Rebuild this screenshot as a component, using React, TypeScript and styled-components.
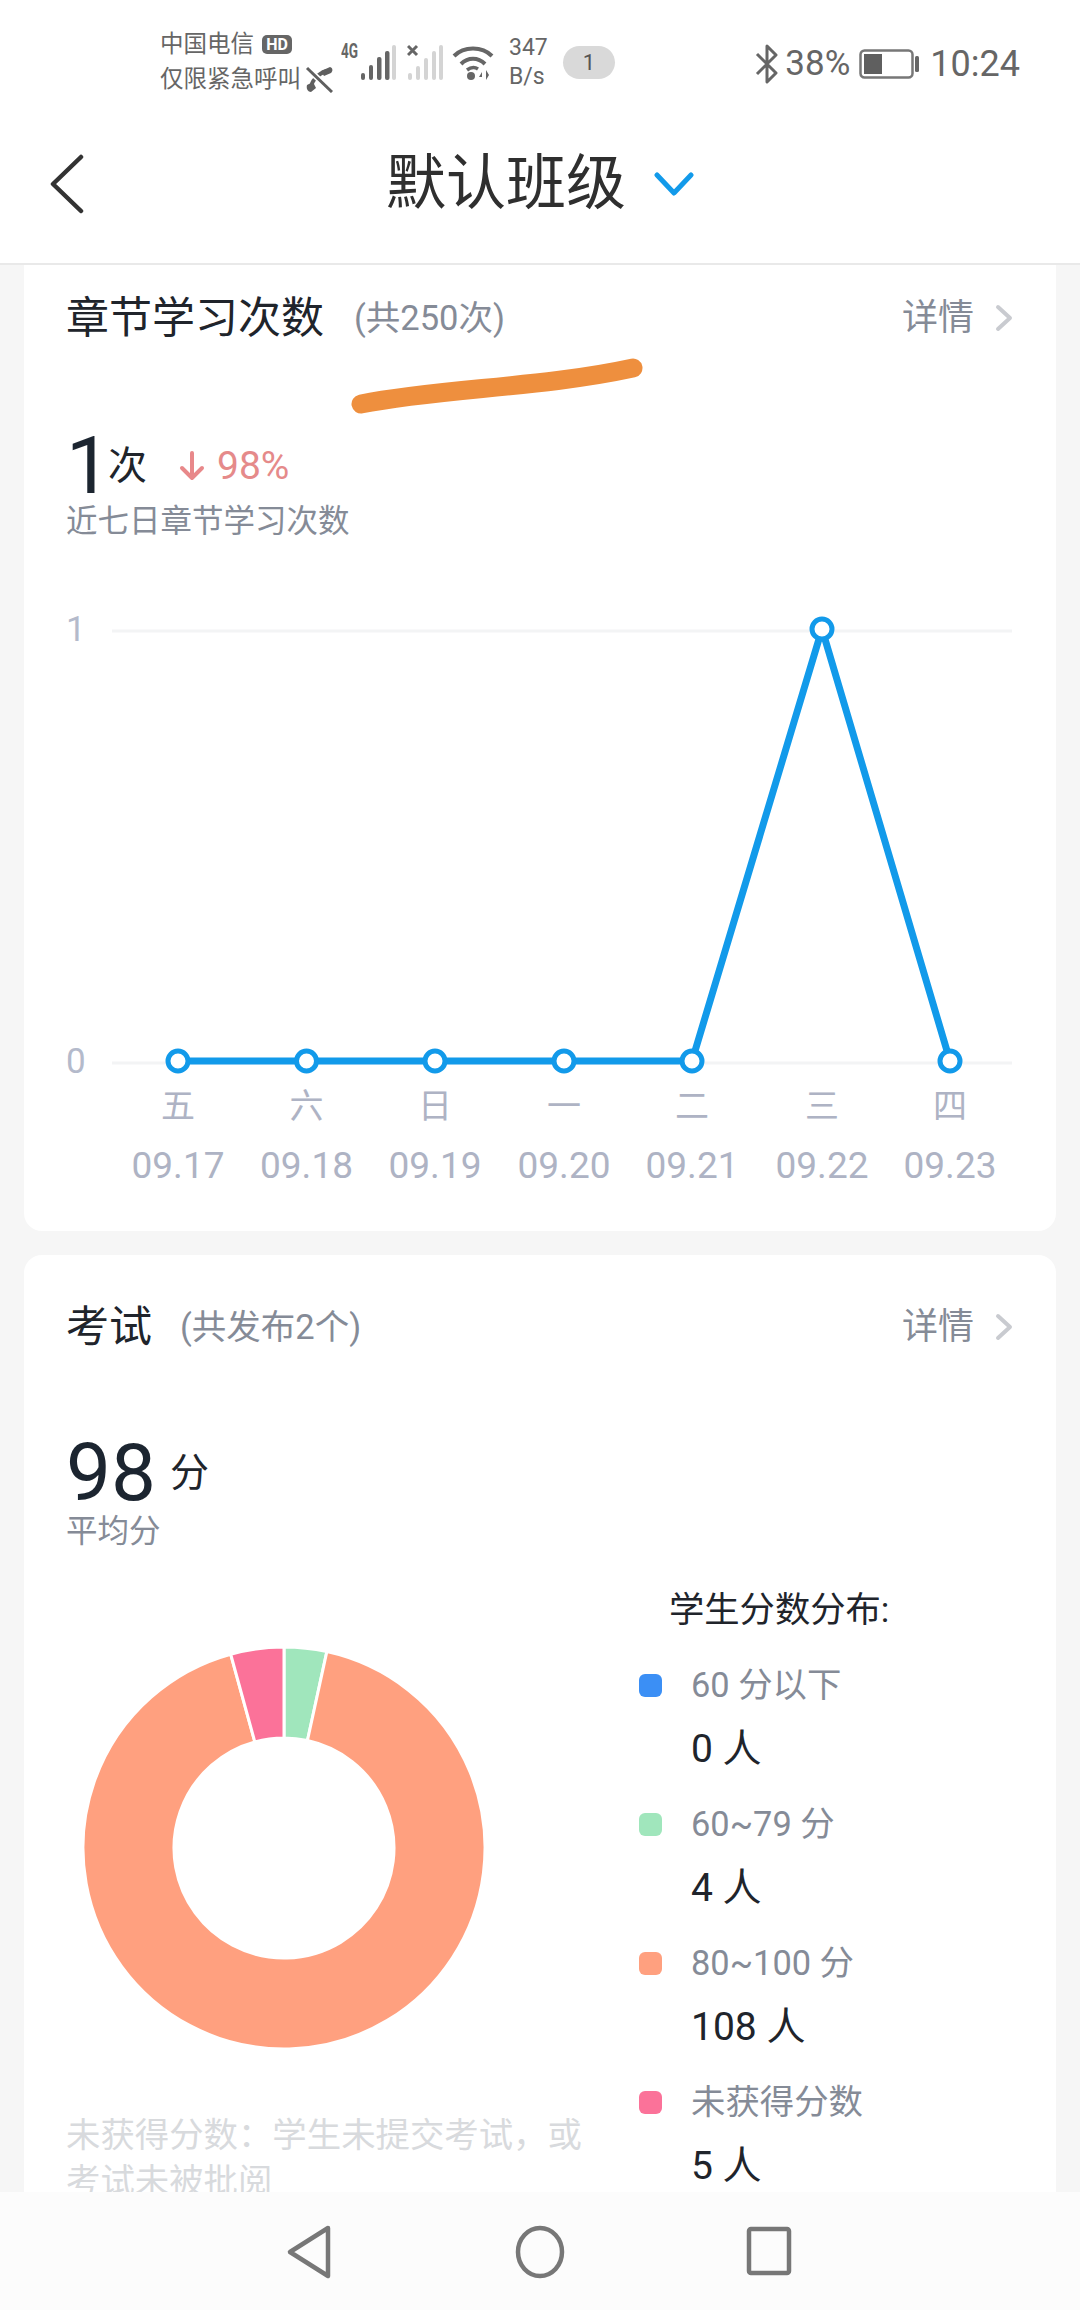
import styled, { createGlobalStyle } from "styled-components";

const GlobalStyle = createGlobalStyle`
  html, body {
    margin: 0;
    padding: 0;
    background: #fff;
  }
  body {
    font-family: Roboto, "Noto Sans CJK SC", sans-serif;
  }
`;

const Page = styled.div`
  position: relative;
  width: 1080px;
  height: 2310px;
  display: flex;
  flex-direction: column;
  overflow: hidden;
  background: #f6f6f6;
`;

const StatusBar = styled.div`
  height: 100px;
  flex: none;
  display: flex;
  align-items: flex-start;
  padding: 30px 60px 0 160px;
  box-sizing: border-box;
  background: #fff;
  color: #666;
`;

const Carrier = styled.div`
  width: 146px;
  display: flex;
  flex-direction: column;
  gap: 6px;
  font-size: 23.5px;
  line-height: 29px;
  white-space: nowrap;
`;

const CarrierLine = styled.div`
  display: flex;
  align-items: center;
  gap: 8px;
`;

const HdBadge = styled.span`
  width: 30px;
  height: 19px;
  border-radius: 5px;
  background: #666;
  color: #fff;
  font-size: 16px;
  font-weight: 700;
  line-height: 19px;
  text-align: center;
`;

const StatusIcon = styled.svg<{ $top: number; $left: number }>`
  flex: none;
  margin-top: ${({ $top }) => $top}px;
  margin-left: ${({ $left }) => $left}px;
`;

const Signals = styled.div`
  display: flex;
  align-items: flex-start;
`;

const Network = styled.span`
  width: 18px;
  margin: 10px 0 0 8px;
  font-size: 20px;
  font-weight: 700;
  line-height: 22px;
  transform: scaleX(0.68);
  transform-origin: left center;
`;

const Speed = styled.div`
  width: 52px;
  margin: 3px 0 0 15px;
  font-size: 23px;
  line-height: 29px;
`;

const CountBadge = styled.span`
  width: 52px;
  height: 33px;
  margin: 16px 0 0 2px;
  border-radius: 17px;
  background: #d9d9d9;
  color: #555;
  font-size: 22px;
  line-height: 33px;
  text-align: center;
`;

const StatusRight = styled.div`
  margin-left: auto;
  margin-top: -2px;
  display: flex;
  align-items: center;
  height: 72px;
`;

const BatteryText = styled.span`
  font-size: 35px;
  line-height: 72px;
  margin: 0 9px 0 6px;
`;

const Clock = styled.span`
  font-size: 36px;
  line-height: 72px;
  margin-left: 11px;
`;

const TitleBar = styled.div`
  height: 165px;
  flex: none;
  display: grid;
  grid-template-columns: 1fr auto 1fr;
  align-items: center;
  padding-top: 4px;
  box-sizing: border-box;
  border-bottom: 2px solid #e9e9e9;
  background: #fff;
`;

const BackSlot = styled.div`
  padding-left: 50px;
  display: flex;
`;

const TitleGroup = styled.div`
  display: flex;
  align-items: center;
  gap: 28px;
`;

const Title = styled.span`
  font-size: 60px;
  line-height: 70px;
  color: #2f2f2f;
`;

const Main = styled.div`
  flex: 1;
  min-height: 0;
  overflow: hidden;
  padding: 0 24px;
  display: flex;
  flex-direction: column;
  gap: 24px;
`;

const Card = styled.section<{ $top: number }>`
  flex: none;
  padding: ${({ $top }) => $top}px 42px 32px;
  border-radius: 0 0 18px 18px;
  background: #fff;

  & + & {
    border-radius: 18px;
  }
`;

const CardHead = styled.div`
  height: 100px;
  display: flex;
  align-items: center;
`;

const CardTitle = styled.h2`
  margin: 0;
  font-size: 43px;
  font-weight: 400;
  line-height: 60px;
  color: #20242b;
`;

const CardCount = styled.span<{ $gap: number }>`
  margin-left: ${({ $gap }) => $gap}px;
  font-size: 34.5px;
  line-height: 60px;
  color: #858b97;
`;

const DetailLink = styled.div`
  margin-left: auto;
  display: flex;
  align-items: center;
  gap: 20px;
  font-size: 36px;
  line-height: 60px;
  color: #858b97;
`;

const StatRow = styled.div<{ $top: number }>`
  height: 68px;
  margin-top: ${({ $top }) => $top}px;
  display: flex;
  align-items: center;
`;

const StatValue = styled.span`
  font-size: 80px;
  line-height: 68px;
  color: #1c2530;
`;

const StatUnit = styled.span<{ $gap: number }>`
  margin-left: ${({ $gap }) => $gap}px;
  font-size: 39px;
  line-height: 50px;
  color: #20242b;
`;

const Trend = styled.span`
  display: flex;
  align-items: center;
  gap: 12px;
  margin-left: 32px;
  font-size: 39px;
  line-height: 50px;
  color: #e58a8a;
`;

const StatNote = styled.div<{ $top: number }>`
  margin-top: ${({ $top }) => $top}px;
  font-size: 31.5px;
  line-height: 44px;
  color: #858b97;
`;

const Highlight = styled.svg`
  position: absolute;
  left: 351px;
  top: 350px;
`;

const ChartSvg = styled.svg`
  display: block;
  margin-top: 35px;
`;

const ExamBody = styled.div`
  margin-top: 28px;
  display: grid;
  grid-template-columns: 573px 1fr;
`;

const DonutColumn = styled.div`
  padding-top: 64px;
`;

const DonutSvg = styled.svg`
  display: block;
  margin-left: 16px;
`;

const DonutNote = styled.p`
  width: 530px;
  margin: 62px 0 0;
  font-size: 34.4px;
  line-height: 46px;
  color: #d8dadd;
`;

const LegendHeading = styled.div`
  padding-left: 30px;
  margin-bottom: 24px;
  font-size: 35.3px;
  line-height: 56px;
  color: #20242b;
  white-space: nowrap;
`;

const LegendItem = styled.div`
  display: grid;
  grid-template-columns: 52px 1fr;
  row-gap: 16px;
  align-items: center;
  margin-bottom: 27px;
`;

const LegendDot = styled.span<{ $color: string }>`
  width: 23px;
  height: 23px;
  border-radius: 6px;
  background: ${({ $color }) => $color};
`;

const LegendLabel = styled.span`
  font-size: 34.4px;
  line-height: 46px;
  color: #858b97;
`;

const LegendValue = styled.span`
  grid-column: 2;
  font-size: 39px;
  line-height: 50px;
  color: #20242b;
`;

const NavBar = styled.div`
  height: 118px;
  flex: none;
  display: flex;
  align-items: flex-start;
  padding: 32px 0 0 286px;
  box-sizing: border-box;
  background: #fcfcfc;
`;

const NavIcon = styled.svg<{ $gap?: number }>`
  margin-left: ${({ $gap = 0 }) => $gap}px;
  fill: none;
  stroke: #777;
  stroke-width: 4.5;
  stroke-linejoin: round;
`;

const Chevron = ({ color, width, height, points, strokeWidth }: { color: string; width: number; height: number; points: string; strokeWidth: number }) => (
  <svg width={width} height={height} viewBox={`0 0 ${width} ${height}`}>
    <polyline points={points} fill="none" stroke={color} strokeWidth={strokeWidth} strokeLinecap="round" strokeLinejoin="round" />
  </svg>
);

const Points = [
  { x: 112, v: 0, day: "五", date: "09.17" },
  { x: 240.5, v: 0, day: "六", date: "09.18" },
  { x: 369, v: 0, day: "日", date: "09.19" },
  { x: 498, v: 0, day: "一", date: "09.20" },
  { x: 626, v: 0, day: "二", date: "09.21" },
  { x: 756, v: 1, day: "三", date: "09.22" },
  { x: 884, v: 0, day: "四", date: "09.23" },
];

const y0 = 482;
const y1 = 50;

const LineChart = () => {
  const pointY = (v: number) => (v === 1 ? y1 : y0);
  return (
    <ChartSvg width="948" height="620" viewBox="0 0 948 620">
      <line x1="46" x2="946" y1={y1 + 2} y2={y1 + 2} stroke="#f3f4f5" strokeWidth="3" />
      <line x1="46" x2="946" y1={y0 + 2} y2={y0 + 2} stroke="#f3f4f5" strokeWidth="3" />
      <text x="0" y={y1 + 12} fontSize="35" fill="#b4bacb">1</text>
      <text x="0" y={y0 + 12} fontSize="35" fill="#b4bacb">0</text>
      <polyline
        points={Points.map((p) => `${p.x},${pointY(p.v)}`).join(" ")}
        fill="none"
        stroke="#129aea"
        strokeWidth="7"
        strokeLinejoin="round"
      />
      {Points.map((p) => (
        <g key={p.date}>
          <circle cx={p.x} cy={pointY(p.v)} r="10" fill="#fff" stroke="#129aea" strokeWidth="5" />
          <text x={p.x} y={y0 + 45} dy="0.36em" fontSize="34" fill="#aeb3c4" textAnchor="middle">
            {p.day}
          </text>
          <text x={p.x} y="599" fontSize="37" fill="#aeb3c4" textAnchor="middle">
            {p.date}
          </text>
        </g>
      ))}
    </ChartSvg>
  );
};

const Slices = [
  { value: 4, color: "#a0e6bc" },
  { value: 108, color: "#ffa07f" },
  { value: 5, color: "#fb7299" },
];

const slicePath = (from: number, to: number) => {
  const cx = 202;
  const cy = 202;
  const outer = 201;
  const inner = 110;
  const at = (r: number, a: number) => {
    const rad = (a - 90) * (Math.PI / 180);
    return `${(cx + r * Math.cos(rad)).toFixed(2)} ${(cy + r * Math.sin(rad)).toFixed(2)}`;
  };
  const large = to - from > 180 ? 1 : 0;
  return `M${at(outer, from)} A${outer} ${outer} 0 ${large} 1 ${at(outer, to)} L${at(inner, to)} A${inner} ${inner} 0 ${large} 0 ${at(inner, from)} Z`;
};

const Donut = () => {
  const total = Slices.reduce((acc, s) => acc + s.value, 0);
  let start = 0;
  return (
    <DonutSvg width="404" height="404" viewBox="0 0 404 404">
      {Slices.map((s) => {
        const end = start + (s.value / total) * 360;
        const d = slicePath(start, end);
        start = end;
        return <path key={s.color} d={d} fill={s.color} stroke="#fff" strokeWidth="3" />;
      })}
    </DonutSvg>
  );
};

const legend = [
  { color: "#3b8ff5", label: "60 分以下", value: "0 人" },
  { color: "#a0e6bc", label: "60~79 分", value: "4 人" },
  { color: "#ffa07f", label: "80~100 分", value: "108 人" },
  { color: "#fb7299", label: "未获得分数", value: "5 人" },
];

// full-width colon and comma, as in the original copy
const donutNote = "未获得分数\uFF1A学生未提交考试\uFF0C或考试未被批阅";

const Detail = () => (
  <DetailLink>
    详情
    <Chevron color="#c9cbd0" width="20" height="28" points="4,3 16,14 4,25" strokeWidth={4} />
  </DetailLink>
);

export default function App() {
  return (
    <>
      <GlobalStyle />
      <Page>
        <StatusBar>
          <Carrier>
            <CarrierLine>
              中国电信
              <HdBadge>HD</HdBadge>
            </CarrierLine>
            <CarrierLine>仅限紧急呼叫</CarrierLine>
          </Carrier>
          <Signals>
            <StatusIcon $top={35} $left={-1} width="28" height="28" viewBox="0 0 28 28">
              <path d="M6 23 C6 17 13 8 22 6" fill="none" stroke="#5f5f5f" strokeWidth="4" />
              <path d="M2 20 L8 17 L11 23 L6 27 C3 27 1 24 2 20 Z" fill="#5f5f5f" />
              <path d="M16 6 L25 2 C28 3 28 6 26 8 L19 11 Z" fill="#5f5f5f" />
              <line x1="2" y1="3" x2="27" y2="27" stroke="#fff" strokeWidth="6" />
              <line x1="2" y1="3" x2="27" y2="27" stroke="#5f5f5f" strokeWidth="3" />
            </StatusIcon>
            <Network>4G</Network>
            <StatusIcon $top={15} $left={1} width="36" height="36" viewBox="0 0 36 36">
              <rect x="1" y="28" width="4" height="7" rx="2" fill="#666" />
              <rect x="9" y="20" width="4" height="15" rx="2" fill="#666" />
              <rect x="17" y="12" width="4.5" height="23" rx="2" fill="#666" />
              <rect x="25" y="6" width="4.5" height="29" rx="2" fill="#666" />
              <rect x="32" y="0" width="4" height="35" rx="2" fill="#d4d4d4" />
            </StatusIcon>
            <StatusIcon $top={13} $left={11} width="36" height="38" viewBox="0 0 36 38">
              <path d="M1 3l9 9M10 3l-9 9" stroke="#666" strokeWidth="3" />
              <rect x="1" y="30" width="4" height="7" rx="2" fill="#d4d4d4" />
              <rect x="9" y="23" width="4" height="14" rx="2" fill="#d4d4d4" />
              <rect x="17" y="15" width="4" height="22" rx="2" fill="#d4d4d4" />
              <rect x="25" y="8" width="4" height="29" rx="2" fill="#d4d4d4" />
              <rect x="32" y="2" width="4" height="35" rx="2" fill="#d4d4d4" />
            </StatusIcon>
            <StatusIcon $top={15} $left={9} width="42" height="36" viewBox="0 0 42 36">
              <path d="M2 11c10-10 28-10 38 0" fill="none" stroke="#666" strokeWidth="4" />
              <path d="M9 19c7-7 17-7 24 0" fill="none" stroke="#666" strokeWidth="4" />
              <path d="M15 25c4-3 8-3 11-1" fill="none" stroke="#666" strokeWidth="3.5" />
              <circle cx="19" cy="31" r="4" fill="#666" />
              <path d="M30 27l-3 5h3zM34 25v10l3-5z" fill="#666" />
            </StatusIcon>
            <Speed>
              347
              <br />
              B/s
            </Speed>
            <CountBadge>1</CountBadge>
          </Signals>
          <StatusRight>
            <svg width="24" height="40" viewBox="0 0 24 40">
              <polyline points="2,10 21,29 12,38 12,2 21,11 2,30" fill="none" stroke="#666" strokeWidth="3" strokeLinejoin="round" />
            </svg>
            <BatteryText>38%</BatteryText>
            <svg width="60" height="30" viewBox="0 0 60 30">
              <rect x="1.5" y="1.5" width="52" height="27" rx="4" fill="none" stroke="#777" strokeWidth="2.5" />
              <rect x="5" y="5" width="18" height="20" fill="#5f5f5f" />
              <rect x="56" y="7" width="4" height="16" rx="1.5" fill="#666" />
            </svg>
            <Clock>10:24</Clock>
          </StatusRight>
        </StatusBar>

        <TitleBar>
          <BackSlot>
            <Chevron color="#333" width="34" height="60" points="31,3 3,30 31,57" strokeWidth={4.5} />
          </BackSlot>
          <TitleGroup>
            <Title>默认班级</Title>
            <Chevron color="#129aea" width="40" height="24" points="3,3 20,21 37,3" strokeWidth={5} />
          </TitleGroup>
        </TitleBar>

        <Main>
          <Card $top={3}>
            <CardHead>
              <CardTitle>章节学习次数</CardTitle>
              <CardCount $gap={30}>(共250次)</CardCount>
              <Detail />
            </CardHead>
            <StatRow $top={64}>
              <StatValue>1</StatValue>
              <StatUnit $gap={-3}>次</StatUnit>
              <Trend>
                <svg width="26" height="30" viewBox="0 0 26 30">
                  <path d="M13 2v25M3 17l10 10 10-10" fill="none" stroke="#e8888a" strokeWidth="4" strokeLinecap="round" strokeLinejoin="round" />
                </svg>
                98%
              </Trend>
            </StatRow>
            <StatNote $top={0}>近七日章节学习次数</StatNote>
            <LineChart />
          </Card>

          <Card $top={22}>
            <CardHead>
              <CardTitle>考试</CardTitle>
              <CardCount $gap={28}>(共发布2个)</CardCount>
              <Detail />
            </CardHead>
            <StatRow $top={62}>
              <StatValue>98</StatValue>
              <StatUnit $gap={14}>分</StatUnit>
            </StatRow>
            <StatNote $top={3}>平均分</StatNote>
            <ExamBody>
              <DonutColumn>
                <Donut />
                <DonutNote>{donutNote}</DonutNote>
              </DonutColumn>
              <div>
                <LegendHeading>学生分数分布:</LegendHeading>
                {legend.map((item) => (
                  <LegendItem key={item.label}>
                    <LegendDot $color={item.color} />
                    <LegendLabel>{item.label}</LegendLabel>
                    <LegendValue>{item.value}</LegendValue>
                  </LegendItem>
                ))}
              </div>
            </ExamBody>
          </Card>
        </Main>

        <NavBar>
          <NavIcon width="46" height="56" viewBox="0 0 46 56">
            <path d="M42 4 L4 28 L42 52 Z" />
          </NavIcon>
          <NavIcon $gap={182} width="52" height="56" viewBox="0 0 52 56">
            <ellipse cx="26" cy="28" rx="22" ry="24" />
          </NavIcon>
          <NavIcon $gap={180} width="46" height="56" viewBox="0 0 46 56">
            <rect x="3" y="5" width="40" height="44" rx="2" />
          </NavIcon>
        </NavBar>
        <Highlight width="310" height="70" viewBox="0 0 310 70">
          <path d="M10 54 C90 38 190 38 282 18" fill="none" stroke="#ee8f3e" strokeWidth="19" strokeLinecap="round" />
        </Highlight>
      </Page>
    </>
  );
}
